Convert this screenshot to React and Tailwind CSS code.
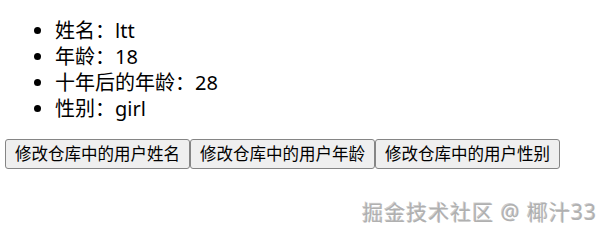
import React from "react";

const items = ["姓名：ltt", "年龄：18", "十年后的年龄：28", "性别：girl"];
const buttons = ["修改仓库中的用户姓名", "修改仓库中的用户年龄", "修改仓库中的用户性别"];

export default function App() {
  return (
    <div
      className="relative w-[608px] h-[236px] bg-white text-black overflow-hidden"
      style={{ fontFamily: '"Noto Sans", "Noto Sans CJK SC", sans-serif' }}
    >
      <ul className="pt-[18px] pl-[55px] list-disc text-[20px] leading-[26px]">
        {items.map((t) => (
          <li key={t}>{t}</li>
        ))}
      </ul>
      <div className="flex mt-[17px] ml-[5px]">
        {buttons.map((b) => (
          <button
            key={b}
            className="h-[30px] px-[9px] bg-[#efefef] border border-[#858585] rounded-[3px] text-[16.5px] leading-none text-black"
          >
            {b}
          </button>
        ))}
      </div>
      <div
        className="absolute right-[11px] top-[199px] text-[21px] leading-[26px] text-[#b0b0b0] tracking-[1px]"
        style={{ textShadow: "1px 1px 0 rgba(255,255,255,0.9), -1px -1px 0 rgba(0,0,0,0.2), 1px 0 0 rgba(0,0,0,0.08)" }}
      >
        掘金技术社区 @ 椰汁33
      </div>
    </div>
  );
}
